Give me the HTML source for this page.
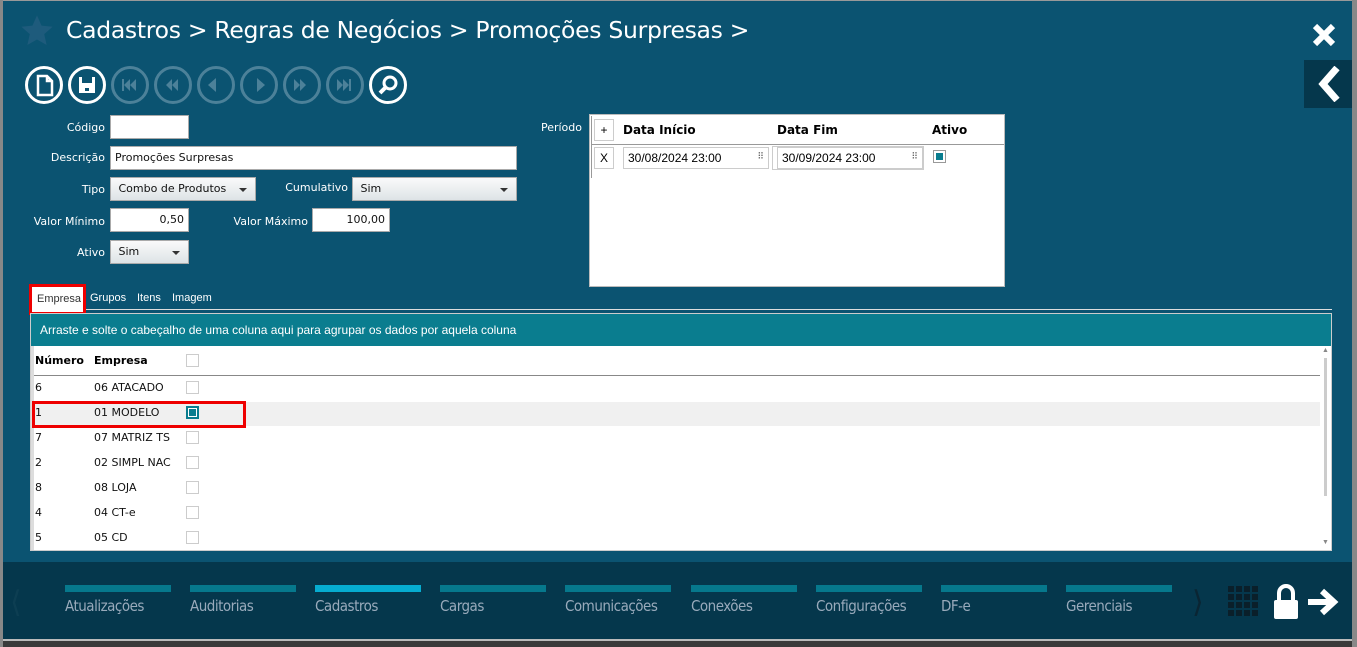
<!DOCTYPE html>
<html><head><meta charset="utf-8"><style>
*{box-sizing:border-box;margin:0;padding:0}
body{width:1357px;height:647px;overflow:hidden;background:#3a3a3a;font-family:"Liberation Sans",sans-serif;position:relative}
.main{position:absolute;left:3px;top:0;width:1349px;height:562px;background:#0b5371;border-top:1px solid #999}
.bot{position:absolute;left:3px;top:562px;width:1349px;height:79px;background:#05374c;border-bottom:2px solid #bbb}
.edge{position:absolute;top:0;width:3px;height:647px;background:#888}
.t{position:absolute;white-space:nowrap}
.lbl{position:absolute;color:#fff;font-size:12px;text-align:right;font-family:"DejaVu Sans",sans-serif;font-size:11px}
.in{position:absolute;background:#fff;border:1px solid #aaa;height:24px;font-family:"DejaVu Sans",sans-serif;font-size:11px;padding:4px 4px;color:#111}
.sel{background:linear-gradient(#fafafa,#dde3e6)}
.arr{position:absolute;right:8px;top:10px;border-left:4px solid transparent;border-right:4px solid transparent;border-top:4px solid #333}
.btn{position:absolute;top:66px;width:38px;height:38px;border-radius:50%;border:3px solid #fff}
.btn.d{border-color:#4c8199}
.cb{position:absolute;width:13px;height:13px;border:1px solid #ccc;background:#fff}
.row{position:absolute;left:32px;width:1288px;height:25px;font-family:"DejaVu Sans",sans-serif;font-size:11px;color:#111}
.nav{position:absolute;top:585px;width:106px;height:7px;background:#06788c}
.nl{position:absolute;top:597px;color:#9ab;font-size:15px;letter-spacing:-0.5px;font-family:"DejaVu Sans Condensed","Liberation Sans Narrow",sans-serif}
</style></head><body>
<div class="edge" style="left:0"></div><div class="edge" style="left:1352px;width:5px"></div>
<div class="main"></div>
<div class="bot"></div>
<svg class="t" style="left:19px;top:14px" width="36" height="34" viewBox="0 0 24 24"><path d="M12 1l3.2 7.2 7.8.8-5.9 5.2 1.7 7.7L12 18l-6.8 3.9 1.7-7.7L1 9l7.8-.8z" fill="#1e5b7c"/></svg>
<div class="t" style="left:66px;top:16px;color:#fff;font-size:23.5px;font-family:'DejaVu Sans',sans-serif;letter-spacing:-0.3px">Cadastros &gt; Regras de Negócios &gt; Promoções Surpresas &gt;</div>
<svg class="t" style="left:1311px;top:22px" width="26" height="26" viewBox="0 0 26 26"><path d="M4 4L22 22M22 4L4 22" stroke="#fff" stroke-width="6"/></svg>
<div class="t" style="left:1304px;top:60px;width:48px;height:48px;background:#05374c"></div>
<svg class="t" style="left:1315px;top:66px" width="28" height="36" viewBox="0 0 28 36"><path d="M22 2L8 18L22 34" stroke="#fff" stroke-width="7" fill="none"/></svg>
<div class="btn" style="left:25px"><svg width="32" height="32" viewBox="0 0 32 32"><path d="M10 7h9l5 5v14H10z M19 7v5h5" stroke="#fff" stroke-width="2.5" fill="none"/></svg></div>
<div class="btn" style="left:68px"><svg width="32" height="32" viewBox="0 0 32 32"><path d="M8 8h16v16H8z" fill="#fff"/><rect x="11" y="8" width="10" height="6" fill="#0b5371"/><rect x="14" y="19" width="4" height="3" fill="#0b5371"/></svg></div>
<div class="btn d" style="left:111px"></div><div class="btn d" style="left:154px"></div><div class="btn d" style="left:197px"></div><div class="btn d" style="left:240px"></div><div class="btn d" style="left:283px"></div><div class="btn d" style="left:326px"></div>
<svg class="t" style="left:114px;top:69px" width="260" height="32" viewBox="0 0 260 32" fill="#4c8199"><rect x="8" y="10" width="2" height="12"/><path d="M10 16l6-6v12zM16 16l6-6v12z"/><path d="M52 16l6-6v12zM58 16l6-6v12z"/><path d="M94 16l8-7v14z"/><path d="M143 9l8 7-8 7z"/><path d="M180 10l6 6-6 6zM186 10l6 6-6 6z"/><path d="M223 10l6 6-6 6zM229 10l6 6-6 6z"/><rect x="235" y="10" width="2" height="12"/></svg>
<div class="btn" style="left:369px"><svg width="32" height="32" viewBox="0 0 32 32"><circle cx="18" cy="14" r="6" stroke="#fff" stroke-width="3" fill="none"/><path d="M14 18l-6 6" stroke="#fff" stroke-width="4"/></svg></div>
<div class="lbl" style="left:40px;width:65px;top:121px">Código</div>
<div class="in" style="left:110px;top:115px;width:79px"></div>
<div class="lbl" style="left:30px;width:75px;top:151px">Descrição</div>
<div class="in" style="left:110px;top:146px;width:407px">Promoções Surpresas</div>
<div class="lbl" style="left:40px;width:65px;top:183px">Tipo</div>
<div class="in sel" style="left:110px;top:177px;width:146px">&nbsp;Combo de Produtos<span class="arr"></span></div>
<div class="lbl" style="left:270px;width:78px;top:181px">Cumulativo</div>
<div class="in sel" style="left:352px;top:177px;width:165px">&nbsp;Sim<span class="arr"></span></div>
<div class="lbl" style="left:20px;width:85px;top:215px">Valor Mínimo</div>
<div class="in" style="left:110px;top:208px;width:79px;text-align:right">0,50</div>
<div class="lbl" style="left:220px;width:88px;top:215px">Valor Máximo</div>
<div class="in" style="left:312px;top:208px;width:78px;text-align:right">100,00</div>
<div class="lbl" style="left:40px;width:65px;top:246px">Ativo</div>
<div class="in sel" style="left:110px;top:240px;width:79px">&nbsp;Sim<span class="arr"></span></div>
<div class="lbl" style="left:530px;width:52px;top:121px">Período</div>
<div class="t" style="left:589px;top:114px;width:416px;height:173px;background:#fff;border:1px solid #bbb"></div>
<div class="t" style="left:591px;top:116px;width:1px;height:62px;background:#999"></div>
<div class="t" style="left:594px;top:119px;width:20px;height:22px;border:1px solid #ccc;font-size:12px;text-align:center;line-height:20px">+</div>
<div class="t" style="left:623px;top:123px;font-size:12px;font-weight:bold;font-family:'DejaVu Sans',sans-serif">Data Início</div>
<div class="t" style="left:777px;top:123px;font-size:12px;font-weight:bold;font-family:'DejaVu Sans',sans-serif">Data Fim</div>
<div class="t" style="left:932px;top:123px;font-size:12px;font-weight:bold;font-family:'DejaVu Sans',sans-serif">Ativo</div>
<div class="t" style="left:592px;top:144px;width:412px;height:1px;background:#999"></div>
<div class="t" style="left:594px;top:147px;width:20px;height:22px;border:1px solid #ccc;font-size:12px;text-align:center;line-height:20px">X</div>
<div class="t" style="left:623px;top:147px;width:146px;height:22px;border:1px solid #ccc;font-size:12px;padding:3px 4px">30/08/2024 23:00<span style="position:absolute;right:4px;top:3px;font-size:9px;color:#666">⠿</span></div>
<div class="t" style="left:772px;top:146px;width:152px;height:24px;border:1px solid #ccc"></div>
<div class="t" style="left:777px;top:147px;width:146px;height:22px;border:1px solid #ccc;font-size:12px;padding:3px 4px">30/09/2024 23:00<span style="position:absolute;right:4px;top:3px;font-size:9px;color:#666">⠿</span></div>
<div class="cb" style="left:933px;top:150px;border-color:#999"><div style="margin:2px;width:7px;height:7px;background:#0a7d8f"></div></div>
<div class="t" style="left:29px;top:284px;width:57px;height:31px;border:3px solid #e00;background:#fff"></div>
<div class="t" style="left:37px;top:293px;font-size:11px;color:#333">Empresa</div>
<div class="t" style="left:90px;top:292px;font-size:11px;color:#fff">Grupos</div>
<div class="t" style="left:137px;top:292px;font-size:11px;color:#fff">Itens</div>
<div class="t" style="left:172px;top:292px;font-size:11px;color:#fff">Imagem</div>
<div class="t" style="left:86px;top:309px;width:1246px;height:1px;background:#ddd"></div>
<div class="t" style="left:30px;top:313px;width:1302px;height:238px;background:#fff;border:1px solid #ccc"></div>
<div class="t" style="left:31px;top:314px;width:1300px;height:32px;background:#0a7d8f;color:#fff;font-size:12px;padding:9px 9px">Arraste e solte o cabeçalho de uma coluna aqui para agrupar os dados por aquela coluna</div>
<div class="t" style="left:31px;top:346px;width:3px;height:204px;background:#ddd"></div>
<div class="t" style="left:35px;top:354px;font-size:11px;font-weight:bold;font-family:'DejaVu Sans',sans-serif">Número</div>
<div class="t" style="left:94px;top:354px;font-size:11px;font-weight:bold;font-family:'DejaVu Sans',sans-serif">Empresa</div>
<div class="cb" style="left:186px;top:354px"></div>
<div class="t" style="left:34px;top:375px;width:1286px;height:1px;background:#888"></div>
<div class="t" style="left:34px;top:402px;width:1286px;height:24px;background:#f0f0f0"></div>
<div class="row" style="top:381px"><span class="t" style="left:3px">6</span><span class="t" style="left:62px">06 ATACADO</span><div class="cb" style="left:154px;top:0"></div></div>
<div class="row" style="top:406px"><span class="t" style="left:3px">1</span><span class="t" style="left:62px">01 MODELO</span><div class="cb" style="left:154px;top:0;border:2px solid #0a7d8f"><div style="margin:1px;width:7px;height:7px;background:#0a7d8f"></div></div></div>
<div class="row" style="top:431px"><span class="t" style="left:3px">7</span><span class="t" style="left:62px">07 MATRIZ TS</span><div class="cb" style="left:154px;top:0"></div></div>
<div class="row" style="top:456px"><span class="t" style="left:3px">2</span><span class="t" style="left:62px">02 SIMPL NAC</span><div class="cb" style="left:154px;top:0"></div></div>
<div class="row" style="top:481px"><span class="t" style="left:3px">8</span><span class="t" style="left:62px">08 LOJA</span><div class="cb" style="left:154px;top:0"></div></div>
<div class="row" style="top:506px"><span class="t" style="left:3px">4</span><span class="t" style="left:62px">04 CT-e</span><div class="cb" style="left:154px;top:0"></div></div>
<div class="row" style="top:531px"><span class="t" style="left:3px">5</span><span class="t" style="left:62px">05 CD</span><div class="cb" style="left:154px;top:0"></div></div>
<div class="t" style="left:32px;top:401px;width:214px;height:27px;border:3px solid #e00"></div>
<div class="t" style="left:1324px;top:358px;width:3px;height:138px;background:#ccc"></div>
<div class="t" style="left:1322px;top:347px;font-size:7px;color:#888">▲</div>
<div class="t" style="left:1322px;top:539px;font-size:7px;color:#888">▼</div>
<div class="t" style="left:10px;top:585px;color:#0d3e52;font-size:30px">⟨</div>
<div class="nav" style="left:65px"></div><div class="nav" style="left:190px"></div><div class="nav" style="left:315px;background:#06acd0"></div><div class="nav" style="left:440px"></div><div class="nav" style="left:565px"></div><div class="nav" style="left:691px"></div><div class="nav" style="left:816px"></div><div class="nav" style="left:941px"></div><div class="nav" style="left:1066px"></div>
<div class="nl" style="left:65px">Atualizações</div><div class="nl" style="left:190px">Auditorias</div><div class="nl" style="left:315px">Cadastros</div><div class="nl" style="left:440px">Cargas</div><div class="nl" style="left:565px">Comunicações</div><div class="nl" style="left:691px">Conexões</div><div class="nl" style="left:816px">Configurações</div><div class="nl" style="left:941px">DF-e</div><div class="nl" style="left:1066px">Gerenciais</div>
<div class="t" style="left:1192px;top:585px;color:#0a2533;font-size:30px">⟩</div>
<svg class="t" style="left:1228px;top:586px" width="32" height="32" viewBox="0 0 32 32" fill="#0a1f2a"><rect x="0" y="0" width="6" height="6"/><rect x="8" y="0" width="6" height="6"/><rect x="16" y="0" width="6" height="6"/><rect x="24" y="0" width="6" height="6"/><rect x="0" y="8" width="6" height="6"/><rect x="8" y="8" width="6" height="6"/><rect x="16" y="8" width="6" height="6"/><rect x="24" y="8" width="6" height="6"/><rect x="0" y="16" width="6" height="6"/><rect x="8" y="16" width="6" height="6"/><rect x="16" y="16" width="6" height="6"/><rect x="24" y="16" width="6" height="6"/><rect x="0" y="24" width="6" height="6"/><rect x="8" y="24" width="6" height="6"/><rect x="16" y="24" width="6" height="6"/><rect x="24" y="24" width="6" height="6"/></svg>
<svg class="t" style="left:1270px;top:584px" width="32" height="36" viewBox="0 0 32 36"><path d="M9 16V9a7 7 0 0114 0v7" stroke="#fff" stroke-width="4" fill="none"/><rect x="4" y="16" width="24" height="19" rx="2" fill="#fff"/></svg>
<svg class="t" style="left:1306px;top:588px" width="34" height="28" viewBox="0 0 34 28"><path d="M2 14h24M16 3l12 11-12 11" stroke="#fff" stroke-width="6" fill="none"/></svg>
</body></html>
